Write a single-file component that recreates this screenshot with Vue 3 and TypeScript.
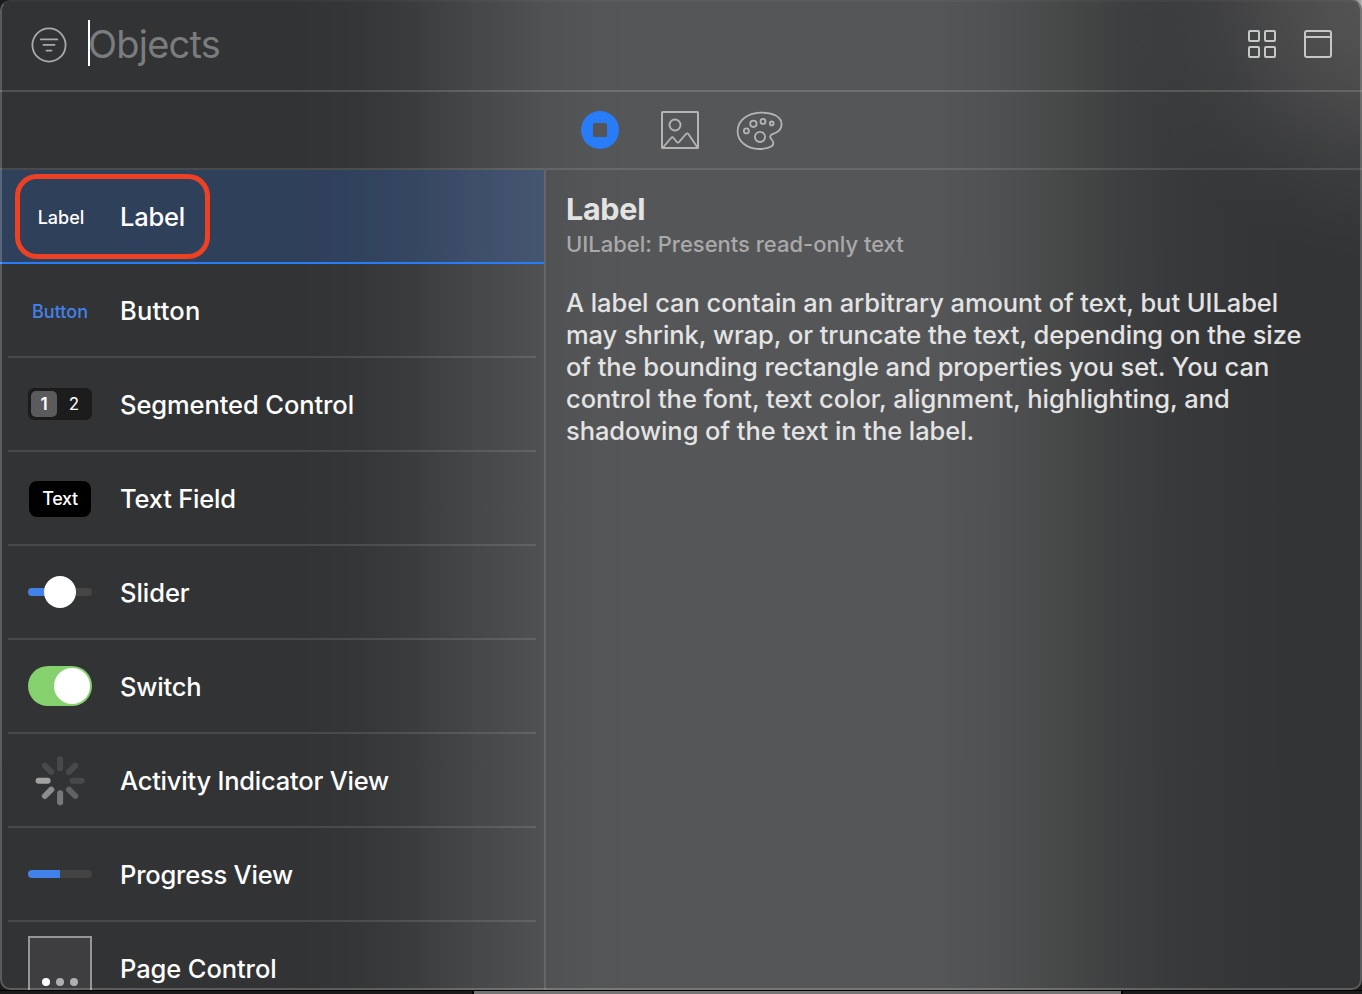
<script setup lang="ts">
import { ref } from 'vue'

type Kind = 'label' | 'button' | 'segmented' | 'text' | 'slider' | 'switch' | 'spinner' | 'progress' | 'page'

interface LibraryItem {
  kind: Kind
  name: string
}

const items: LibraryItem[] = [
  { kind: 'label', name: 'Label' },
  { kind: 'button', name: 'Button' },
  { kind: 'segmented', name: 'Segmented Control' },
  { kind: 'text', name: 'Text Field' },
  { kind: 'slider', name: 'Slider' },
  { kind: 'switch', name: 'Switch' },
  { kind: 'spinner', name: 'Activity Indicator View' },
  { kind: 'progress', name: 'Progress View' },
  { kind: 'page', name: 'Page Control' },
]

const selected = ref<Kind>('label')

const spokes = [
  { angle: 0, color: '#48494a' },
  { angle: 45, color: '#48494a' },
  { angle: 90, color: '#48494a' },
  { angle: 135, color: '#606162' },
  { angle: 180, color: '#777879' },
  { angle: 225, color: '#8b8c8d' },
  { angle: 270, color: '#a2a2a3' },
  { angle: 315, color: '#48494a' },
]

const description = [
  'A label can contain an arbitrary amount of text, but UILabel',
  'may shrink, wrap, or truncate the text, depending on the size',
  'of the bounding rectangle and properties you set. You can',
  'control the font, text color, alignment, highlighting, and',
  'shadowing of the text in the label.',
]
</script>

<template>
  <div class="desktop">
    <main class="window">
      <header class="search">
        <svg class="filter" width="36" height="36" viewBox="0 0 36 36" fill="none" stroke-linecap="round">
          <circle cx="18" cy="18" r="16.6" stroke="#a9aaab" stroke-width="1.8" />
          <path d="M9.8 12.4H26.2M12.5 17.9H23.5M15.5 23.6H20.5" stroke="#a9aaab" stroke-width="1.9" />
        </svg>
        <span class="caret"></span>
        <span class="placeholder">Objects</span>
        <svg class="grid-icon" width="28" height="28" viewBox="0 0 28 28" fill="none" stroke="#c6c7c7" stroke-width="2">
          <rect x="1" y="1" width="10" height="10" rx="1" />
          <rect x="17" y="1" width="10" height="10" rx="1" />
          <rect x="1" y="17" width="10" height="10" rx="1" />
          <rect x="17" y="17" width="10" height="10" rx="1" />
        </svg>
        <svg width="28" height="28" viewBox="0 0 28 28" fill="none" stroke="#c6c7c7" stroke-width="2">
          <rect x="1" y="1" width="26" height="26" rx="2" />
          <path d="M1 7H27" />
        </svg>
      </header>

      <nav class="tabs">
        <svg width="38" height="38" viewBox="0 0 38 38">
          <path
            fill="#287cf8"
            fill-rule="evenodd"
            d="M19 0a19 19 0 1 1 0 38a19 19 0 1 1 0-38ZM13.500 12Q12 12 12 13.500V24.500Q12 26 13.500 26H24.500Q26 26 26 24.500V13.500Q26 12 24.500 12Z"
          />
        </svg>
        <svg width="38" height="38" viewBox="0 0 38 38" fill="none" stroke="#b4b4b5" stroke-width="2" stroke-linejoin="round">
          <rect x="1" y="1" width="36" height="36" rx="0.600" />
          <circle cx="14" cy="14" r="5.500" stroke-width="1.900" />
          <path d="M2 36.500L10 27Q11.300 25.500 12.600 27L16 31.200Q17 32.200 18 31.200L25 23Q26.300 21.700 27.400 23L36.500 36.500" stroke-width="1.800" />
        </svg>
        <svg class="palette" width="46" height="38" viewBox="0.4 0.3 46 38" fill="none" stroke="#b4b4b5" stroke-width="1.800">
          <path d="M24 1C35 .6 44.800 4.500 45 12.500C45.100 17.700 41 20.500 36.500 22.200C33.200 23.500 32.800 25.500 35 27.800C37.500 30.500 37.500 33 34.500 34.900C31.500 36.700 27.500 37.400 22.500 37.300C10 37 1 29.500 1 19.500C1 8.500 11 1.400 24 1Z" />
          <circle cx="9.800" cy="19.200" r="2.500" />
          <circle cx="16.800" cy="12.100" r="3.200" />
          <circle cx="26.400" cy="9.700" r="2.500" />
          <circle cx="35.100" cy="11.700" r="1.900" />
          <circle cx="23.400" cy="25.200" r="5.100" />
        </svg>
      </nav>

      <div class="body">
        <ul class="list">
          <li
            v-for="item in items"
            :key="item.kind"
            class="row"
            :class="{ selected: item.kind === selected }"
            @click="selected = item.kind"
          >
            <div class="thumb">
              <span v-if="item.kind === 'label'" class="t-label">Label</span>
              <span v-else-if="item.kind === 'button'" class="t-button">Button</span>
              <div v-else-if="item.kind === 'segmented'" class="t-segmented">
                <span class="on">1</span><span>2</span>
              </div>
              <span v-else-if="item.kind === 'text'" class="t-text">Text</span>
              <svg v-else-if="item.kind === 'slider'" width="64" height="32" viewBox="0 0 64 32">
                <rect y="12" width="64" height="8" rx="4" fill="#464647" />
                <path d="M4 12H32V20H4a4 4 0 0 1 0-8Z" fill="#4381ea" />
                <circle cx="32" cy="16" r="16" fill="#fff" />
              </svg>
              <svg v-else-if="item.kind === 'switch'" width="64" height="40" viewBox="0 0 64 40">
                <rect width="64" height="40" rx="20" fill="#85d16e" />
                <circle cx="44" cy="20" r="18" fill="#fff" />
              </svg>
              <svg v-else-if="item.kind === 'spinner'" width="52" height="52" viewBox="-26.100 -26.800 52 52">
                <rect
                  v-for="spoke in spokes"
                  :key="spoke.angle"
                  x="-3"
                  y="-24.500"
                  width="6"
                  height="15"
                  rx="3"
                  :fill="spoke.color"
                  :transform="`rotate(${spoke.angle})`"
                />
              </svg>
              <svg v-else-if="item.kind === 'progress'" width="64" height="8" viewBox="0 0 64 8">
                <rect width="64" height="8" rx="4" fill="#434344" />
                <path d="M4 0H32V8H4a4 4 0 0 1 0-8Z" fill="#4381ea" />
              </svg>
              <div v-else class="t-page"><i class="current"></i><i></i><i></i></div>
            </div>
            <span class="name" :class="item.kind">{{ item.name }}</span>
            <span v-if="item.kind === 'label'" class="callout"></span>
          </li>
        </ul>

        <section class="detail">
          <h1>Label</h1>
          <h2>UILabel: Presents read-only text</h2>
          <p><span v-for="(line, i) in description" :key="i" :class="`line-${i}`">{{ line }}</span></p>
        </section>
      </div>
      <div class="frame"></div>
    </main>
  </div>
</template>

<style>
body {
  margin: 0;
  overflow: hidden;
  background: #1b1b1c;
}
</style>

<style scoped>
.desktop {
  box-sizing: border-box;
  width: 1362px;
  height: 994px;
  overflow: hidden;
  font-family: Inter, 'Liberation Sans', sans-serif;
  background:
    linear-gradient(#000, #000) 0 990px / 1362px 1px no-repeat,
    linear-gradient(#757475, #757475) 474px 991px / 647px 3px no-repeat,
    linear-gradient(#000, #000) 472px 991px / 651px 3px no-repeat,
    linear-gradient(90deg, #55555600 1340px, #b5b5b5 1362px) 0 0 / 1362px 20px no-repeat,
    #1b1b1c;
}

.window {
  position: relative;
  display: flex;
  flex-direction: column;
  width: 1362px;
  height: 990px;
  overflow: hidden;
  border-radius: 10px;
  background:
    radial-gradient(ellipse 250px 260px at 1375px 0, rgba(85, 85, 86, 0.97) 0%, rgba(84, 84, 85, 0.87) 20%, rgba(84, 84, 85, 0.62) 42%, rgba(84, 84, 85, 0.3) 64%, rgba(84, 84, 85, 0.1) 83%, rgba(84, 84, 85, 0) 100%),
    linear-gradient(90deg, #323334 0, #323334 300px, #353637 360px, #3b3c3d 415px, #464748 475px, #4f5051 535px, #545556 590px, #555657 640px, #555657 930px, #505152 995px, #474848 1060px, #3e3f40 1120px, #393a3b 1170px, #353637 1230px, #333435 1290px, #333435 1362px);
}

.frame {
  position: absolute;
  inset: 0;
  border: 2px solid rgba(255, 255, 255, 0.2);
  border-top-color: rgba(255, 255, 255, 0.03);
  border-radius: 10px;
  pointer-events: none;
}

.search {
  box-sizing: border-box;
  flex: none;
  display: flex;
  align-items: center;
  height: 92px;
  padding: 0 30px 2px 31px;
  border-bottom: 2px solid rgba(255, 255, 255, 0.15);
}

.filter {
  margin-top: 1px;
}

.caret {
  width: 2px;
  height: 46px;
  margin: -2px 0 0 21px;
  background: #fff;
}

.placeholder {
  flex: 1;
  margin: -1px 0 0 -2px;
  font-size: 38px;
  font-weight: 400;
  line-height: 46px;
  letter-spacing: -0.800px;
  color: #7b7c7d;
}

.grid-icon {
  margin-right: 28px;
}

.tabs {
  box-sizing: border-box;
  flex: none;
  display: flex;
  justify-content: center;
  align-items: center;
  gap: 42px;
  height: 78px;
  padding: 0 0 0 1px;
  border-bottom: 2px solid rgba(255, 255, 255, 0.115);
}

.palette {
  margin: 1px 0 0 -4px;
  overflow: visible;
}

.body {
  flex: 1;
  display: flex;
  min-height: 0;
}

.list {
  box-sizing: border-box;
  flex: none;
  width: 546px;
  margin: 0;
  padding: 0;
  list-style: none;
  overflow: hidden;
  border-right: 2px solid rgba(255, 255, 255, 0.12);
}

.row {
  position: relative;
  box-sizing: border-box;
  display: flex;
  align-items: center;
  height: 94px;
  padding: 0 0 2px 28px;
  background: linear-gradient(rgba(255, 255, 255, 0.11), rgba(255, 255, 255, 0.11)) 8px 92px / 528px 2px no-repeat;
}

.row.selected {
  background:
    linear-gradient(#287cf8, #287cf8) 0 92px / 100% 2px no-repeat,
    rgba(40, 100, 200, 0.270);
}

.thumb {
  display: flex;
  justify-content: center;
  align-items: center;
  width: 64px;
  height: 92px;
}

.name {
  margin: 2px 0 0 28px;
  font-size: 25.500px;
  font-weight: 500;
  line-height: 32px;
  letter-spacing: -0.200px;
  white-space: nowrap;
  color: #fff;
}

.name.button {
  letter-spacing: 0.200px;
}

.name.segmented,
.name.page {
  letter-spacing: -0.090px;
}

.name.slider {
  letter-spacing: -0.050px;
}

.name.spinner,
.name.progress {
  letter-spacing: -0.220px;
}

.callout {
  position: absolute;
  left: 15px;
  top: 4px;
  box-sizing: border-box;
  width: 195px;
  height: 85px;
  border: 5px solid #ee4023;
  border-radius: 22px;
}

.t-label,
.t-button {
  margin: 3px 0 0 2px;
  font-size: 18px;
  font-weight: 500;
  color: #fff;
}

.t-button {
  margin-left: 0;
  font-weight: 450;
  color: #4381ea;
}

.t-segmented {
  box-sizing: border-box;
  display: flex;
  width: 64px;
  height: 32px;
  padding: 3px;
  border-radius: 6px;
  background: #1c1c1d;
}

.t-segmented span {
  flex: none;
  width: 34px;
  font-size: 17px;
  line-height: 27px;
  text-align: center;
  color: #fff;
}

.t-segmented .on {
  width: 26px;
  height: 26px;
  border-radius: 5px;
  background: #5b5b5e;
  font-weight: 600;
}

.t-text {
  box-sizing: border-box;
  width: 62px;
  height: 36px;
  margin-top: 2px;
  border-radius: 8px;
  background: #000;
  font-size: 18px;
  font-weight: 550;
  line-height: 36px;
  letter-spacing: -0.400px;
  text-align: center;
  color: #fff;
}

.t-page {
  box-sizing: border-box;
  display: flex;
  justify-content: center;
  align-items: flex-end;
  gap: 6px;
  width: 64px;
  height: 64px;
  padding-bottom: 12px;
  border: 2px solid #969697;
  background: #3e3e40;
}

.t-page i {
  width: 8px;
  height: 8px;
  border-radius: 50%;
  background: #afafb0;
}

.t-page .current {
  background: #fff;
}

.detail {
  padding: 21px 0 0 20px;
  color: #e3e3e3;
}

h1 {
  margin: 0;
  font-size: 30.500px;
  font-weight: 700;
  line-height: 36px;
  letter-spacing: -0.300px;
}

h2 {
  margin: 3px 0 0;
  font-size: 22px;
  font-weight: 450;
  line-height: 28px;
  letter-spacing: -0.010px;
  color: #a9a9aa;
}

p {
  margin: 29px 0 0;
  font-size: 25.500px;
  font-weight: 450;
  line-height: 32px;
  letter-spacing: -0.070px;
}

p span {
  display: block;
  width: max-content;
  white-space: nowrap;
}

.line-3 {
  letter-spacing: -0.030px;
}
</style>
